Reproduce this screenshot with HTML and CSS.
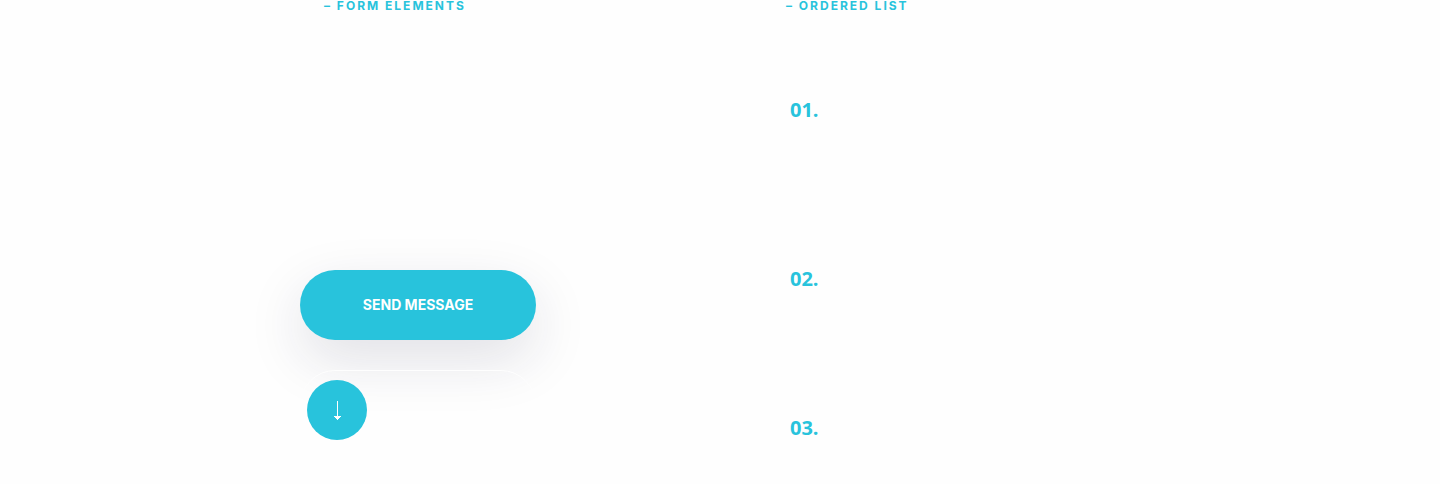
FILE: index.html
```html
<!DOCTYPE html>
<html lang="en">
<head>
<meta charset="utf-8">
<meta name="viewport" content="width=device-width, initial-scale=1">
<title>Elements</title>
<link rel="stylesheet" href="styles.css">
</head>
<body>
<main class="elements">
  <section class="form-section">
    <h2 class="section-title">– FORM ELEMENTS</h2>
    <div class="actions">
      <button class="send-button" type="button">SEND MESSAGE</button>
      <div class="outline-pill">
        <button class="scroll-button" type="button" aria-label="Scroll down">
          <svg class="arrow" width="9" height="19" viewBox="0 0 9 19" aria-hidden="true">
            <path d="M4 0h1v15h3v1H7v1H6v1H5v1H4v-1H3v-1H2v-1H1v-1h3z" fill="#fff"/>
          </svg>
        </button>
      </div>
    </div>
  </section>
  <section class="list-section">
    <h2 class="section-title">– ORDERED LIST</h2>
    <ol class="numbers">
      <li class="number number-tall">01.</li>
      <li class="number">02.</li>
      <li class="number">03.</li>
    </ol>
  </section>
</main>
</body>
</html>
```

FILE: styles.css
```css
* {
  box-sizing: border-box;
}

body {
  margin: 0;
  background: #fefefe;
  color: #28c3dc;
  font-family: "Open Sans", sans-serif;
}

.elements {
  display: grid;
  grid-template-columns: 55% 1fr;
  max-width: 840px;
  margin: 0 auto;
}

.section-title {
  margin: 0;
  padding-left: 24px;
  font: 700 12px/12px Inter, sans-serif;
  letter-spacing: 2px;
}

.actions {
  display: flex;
  flex-direction: column;
  gap: 30px;
  margin-top: 258px;
  width: 236px;
}

.send-button {
  height: 70px;
  padding: 0;
  border: 0;
  border-radius: 35px;
  background: #28c3dc;
  color: #fff;
  font: 700 14px/20px Inter, sans-serif;
  box-shadow: 0 20px 56px rgba(30, 30, 70, 0.13);
}

.outline-pill {
  display: flex;
  align-items: center;
  height: 70px;
  padding-left: 6px;
  border: 1px solid #fefefe;
  border-radius: 35px;
}

.scroll-button {
  display: flex;
  align-items: center;
  justify-content: center;
  width: 60px;
  height: 60px;
  margin-top: 10px;
  padding: 0;
  border: 0;
  border-radius: 50%;
  background: #28c3dc;
}

.numbers {
  margin: 84px 0 0;
  padding-left: 28px;
  list-style: none;
}

.number {
  font-size: 20px;
  font-weight: 700;
  line-height: 28px;
}

.number + .number {
  margin-top: 121px;
}

.number-tall {
  padding-bottom: 20px;
}
```
